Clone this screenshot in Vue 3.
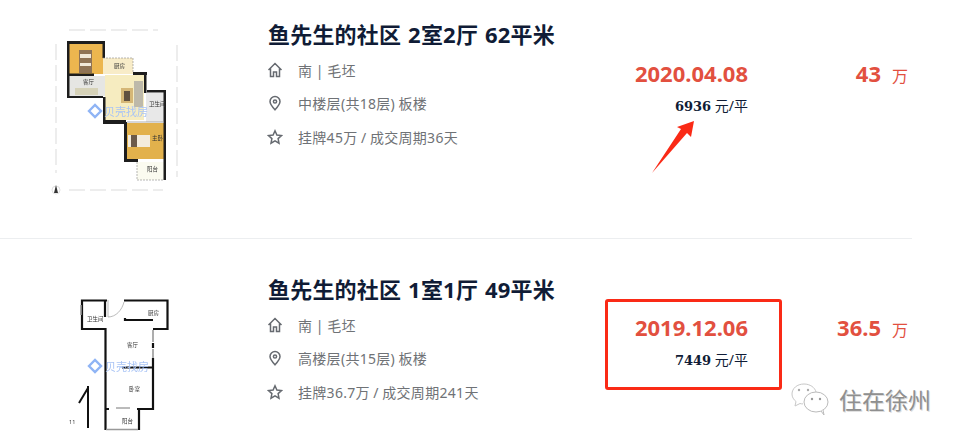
<script setup>
const houses = [
  {
    plan: 'a',
    title: '鱼先生的社区 2室2厅 62平米',
    face: '南 | 毛坯',
    floor: '中楼层(共18层) 板楼',
    deal: '挂牌45万 / 成交周期36天',
    date: '2020.04.08',
    unit: '6936',
    price: '43'
  },
  {
    plan: 'b',
    title: '鱼先生的社区 1室1厅 49平米',
    face: '南 | 毛坯',
    floor: '高楼层(共15层) 板楼',
    deal: '挂牌36.7万 / 成交周期241天',
    date: '2019.12.06',
    unit: '7449',
    price: '36.5'
  }
]
</script>

<template>
  <div class="page">
    <ul class="list">
      <li v-for="h in houses" :key="h.plan" class="row">
        <div class="plan">
          <svg v-if="h.plan === 'a'" width="240" height="220" viewBox="0 0 240 220">
            <path d="M69 30H158M69 190H163M56 44V173M177 45V177" fill="none" stroke="#c4c4c4" stroke-width="0.6" stroke-dasharray="16 5" />
            <!-- rooms -->
            <rect x="69" y="44" width="34" height="30" fill="#ecb64f" />
            <rect x="103" y="58" width="30" height="16" fill="#f8ecc8" />
            <rect x="69" y="76" width="36" height="20" fill="#e6e6e3" />
            <rect x="105" y="75" width="39" height="45" fill="#f6ecc0" />
            <rect x="146" y="93" width="18" height="29" fill="#e8e8e8" />
            <rect x="127" y="123" width="37" height="36" fill="#e2b14c" />
            <rect x="137" y="162" width="27" height="18" fill="#fbfbf0" />
            <!-- furniture -->
            <rect x="79" y="50" width="13" height="23" fill="#8f7355" />
            <rect x="80" y="54" width="11" height="4" fill="#f1e8d8" />
            <rect x="80" y="63" width="11" height="3" fill="#f1e8d8" />
            <rect x="75" y="88" width="23" height="7" fill="#d6d2b8" />
            <rect x="121" y="88" width="12" height="15" fill="#d5b777" />
            <rect x="124" y="91" width="6" height="10" fill="#5f5040" />
            <rect x="134" y="81" width="9" height="26" fill="#bdb9aa" />
            <rect x="128" y="135" width="22" height="12" fill="#f3ecdd" />
            <rect x="131" y="135" width="6" height="12" fill="#6b5a4a" />
            <!-- walls -->
            <g fill="#1d1d1d">
              <rect x="67" y="41" width="38" height="3" />
              <rect x="67" y="41" width="2.500" height="57" />
              <rect x="102.500" y="41" width="2.500" height="17" />
              <rect x="69" y="73.500" width="25" height="2.500" />
              <rect x="67" y="96" width="36" height="2" />
              <rect x="133" y="72" width="14" height="3" />
              <rect x="144" y="72" width="2.500" height="21" />
              <rect x="103" y="97" width="2.500" height="27" />
              <rect x="103" y="120" width="23" height="4" />
              <rect x="147" y="90" width="19" height="2.500" />
              <rect x="163.500" y="90" width="2.500" height="90" />
              <rect x="124" y="122" width="3" height="40" />
              <rect x="124" y="159" width="14" height="3" />
            </g>
            <path d="M103 58H133V73M137 162V180H164" fill="none" stroke="#888" stroke-width="0.6" stroke-dasharray="2 1" />
            <path d="M127 122H164" stroke="#999" stroke-width="0.8" />
            <path d="M89 111l6-6 6 6-6 6z" fill="none" stroke="#8fb4f5" stroke-width="2.400" />
            <text x="104" y="116" class="mark">贝壳找房</text>
            <text x="114" y="68" class="tiny">厨房</text>
            <text x="83" y="84" class="tiny">客厅</text>
            <text x="149" y="106" class="tiny">卫生间</text>
            <text x="152" y="140" class="tiny">主卧</text>
            <text x="147" y="171" class="tiny">阳台</text>
            <circle cx="56" cy="190" r="4" fill="none" stroke="#ccc" stroke-width="0.6" />
            <path d="M56 185l-2 8h4z" fill="#333" />
          </svg>
          <svg v-else width="240" height="204" viewBox="0 0 240 204">
            <path
              d="M107 60.500H82V89H105.500V169M124 60.500H167.500V89H153M153 80H125V78M122 127.500H153M153 103V108M153 118V169H137M105.500 169V190M105.500 169H109M139 169V190M105 60V77"
              fill="none" stroke="#111" stroke-width="2.200"
            />
            <path d="M108 60V77C116 77 122 70 124 62" fill="none" stroke="#aaa" stroke-width="0.8" />
            <path d="M116 168H130" stroke="#777" stroke-width="1" />
            <path d="M106 189.500H138M153 90V102M153 109V118M81 65V75" stroke="#999" stroke-width="1.600" />
            <path d="M88 146V188M88 148L79 163" fill="none" stroke="#111" stroke-width="2" />
            <path d="M89 126l6-6 6 6-6 6z" fill="none" stroke="#8fb4f5" stroke-width="2.400" />
            <text x="105" y="131" class="mark">贝壳找房</text>
            <text x="87" y="81" class="tiny">卫生间</text>
            <text x="148" y="75" class="tiny">厨房</text>
            <text x="127" y="107" class="tiny">客厅</text>
            <text x="129" y="151" class="tiny">卧室</text>
            <text x="122" y="183" class="tiny">阳台</text>
            <text x="69" y="184" class="tiny">11</text>
          </svg>
        </div>

        <div class="info">
          <h2 class="title">{{ h.title }}</h2>
          <div class="meta">
            <svg class="icon" viewBox="0 0 16 16">
              <path d="M1.500 8L8 1.500 14.500 8M3.500 6.500V14.500H6.500V10H9.500V14.500H12.500V6.500" />
            </svg>
            <span>{{ h.face }}</span>
          </div>
          <div class="meta">
            <svg class="icon" viewBox="0 0 16 16">
              <path d="M8 14.800C5 11.500 3 9 3 6.500a5 5 0 0 1 10 0C13 9 11 11.500 8 14.800z" />
              <circle cx="8" cy="6.500" r="1.600" />
            </svg>
            <span>{{ h.floor }}</span>
          </div>
          <div class="meta">
            <svg class="icon" viewBox="0 0 16 16">
              <path d="M8 1.800l1.900 4.200 4.600.5-3.400 3.100.9 4.600L8 11.900l-4 2.300.9-4.600L1.500 6.500 6.100 6z" />
            </svg>
            <span>{{ h.deal }}</span>
          </div>
        </div>

        <div class="deal">
          <div class="date">{{ h.date }}</div>
          <div class="unit"><b>{{ h.unit }}</b> 元/平</div>
        </div>

        <div class="price"><b>{{ h.price }}</b><span>万</span></div>
      </li>
    </ul>

    <!-- annotations laid over the screenshot -->
    <svg class="arrow" width="50" height="60" viewBox="0 0 50 60">
      <path d="M2 54L31 10 27 8 44 2 41 18 37 14z" fill="#fa2a16" />
    </svg>
    <div class="box"></div>
    <div class="stamp">
      <svg width="40" height="36" viewBox="0 0 40 36">
        <path d="M14 2C7 2 2 6.500 2 12c0 3 1.500 5.500 4 7.500L5 24l5-2.500c1 .3 2 .4 3 .4" fill="#fff" stroke="#c8c8c8" />
        <path d="M14 2c6 0 11 3.500 12 8" fill="none" stroke="#c8c8c8" />
        <ellipse cx="26" cy="20" rx="12" ry="10" fill="#fff" stroke="#bbb" />
        <path d="M31 29l3 4-1-5" fill="#fff" stroke="#bbb" />
        <circle cx="9" cy="8" r="1.200" fill="#aaa" /><circle cx="18" cy="8" r="1.200" fill="#aaa" />
        <circle cx="22" cy="17" r="1.200" fill="#999" /><circle cx="30" cy="17" r="1.200" fill="#999" />
      </svg>
      <span>住在徐州</span>
    </div>
  </div>
</template>

<style scoped>
.page {
  position: relative;
  width: 964px;
  height: 444px;
  overflow: hidden;
  background: #fff;
  font-family: "Noto Sans", "Noto Sans CJK SC", sans-serif;
}

.list {
  list-style: none;
  margin: -16px 0 0;
  padding: 0;
  width: 912px;
}

.row {
  display: flex;
  height: 254px;
  border-bottom: 1px solid #eceef0;
}

.plan {
  width: 268px;
  flex: none;
  padding-top: 16px;
}

.row + .row .plan {
  padding-top: 1px;
}

.plan svg {
  display: block;
  filter: blur(0.5px);
}

.mark {
  font-size: 11px;
  fill: #a9c4f5;
}

.tiny {
  font-size: 5.500px;
  fill: #333;
}

.info {
  width: 300px;
  flex: none;
  padding-top: 33px;
}

.title {
  margin: 0 0 1px;
  font-size: 22px;
  line-height: 35px;
  font-weight: 700;
  letter-spacing: 0.2px;
  word-spacing: 1px;
  color: #101c36;
  white-space: nowrap;
}

.meta {
  display: flex;
  align-items: center;
  gap: 15px;
  height: 33.500px;
  font-size: 14px;
  letter-spacing: 0.3px;
  word-spacing: -0.5px;
  color: #6f7276;
  white-space: nowrap;
}

.icon {
  width: 16px;
  height: 16px;
  margin-left: -1px;
  fill: none;
  stroke: #666a70;
  stroke-width: 1.500;
}

.deal {
  width: 180px;
  flex: none;
  padding-top: 73px;
  text-align: right;
}

.date {
  font-size: 22px;
  line-height: 32px;
  font-weight: 700;
  color: #e2503f;
}

.unit {
  margin-top: 7px;
  font-size: 14px;
  line-height: 20px;
  color: #101c36;
}

.unit b {
  font-family: "DejaVu Serif", serif;
  font-size: 13px;
}

.price {
  flex: none;
  width: 160px;
  padding-top: 73px;
  line-height: 32px;
  text-align: right;
  color: #e2503f;
  white-space: nowrap;
}

.price b {
  font-size: 22px;
}

.price span {
  margin-left: 11px;
  font-size: 16px;
}

.row + .row .deal,
.row + .row .price {
  padding-top: 72px;
}

.arrow {
  position: absolute;
  left: 650px;
  top: 119px;
}

.box {
  position: absolute;
  left: 605px;
  top: 299px;
  width: 171px;
  height: 85px;
  border: 3px solid #fa2a16;
  border-radius: 3px;
}

.stamp {
  position: absolute;
  left: 790px;
  top: 382px;
  display: flex;
  align-items: center;
  gap: 9px;
  font-size: 23px;
  line-height: 36px;
  color: #8f8f8f;
  text-shadow: 1px 1px 0 #ddd;
  white-space: nowrap;
}
</style>
